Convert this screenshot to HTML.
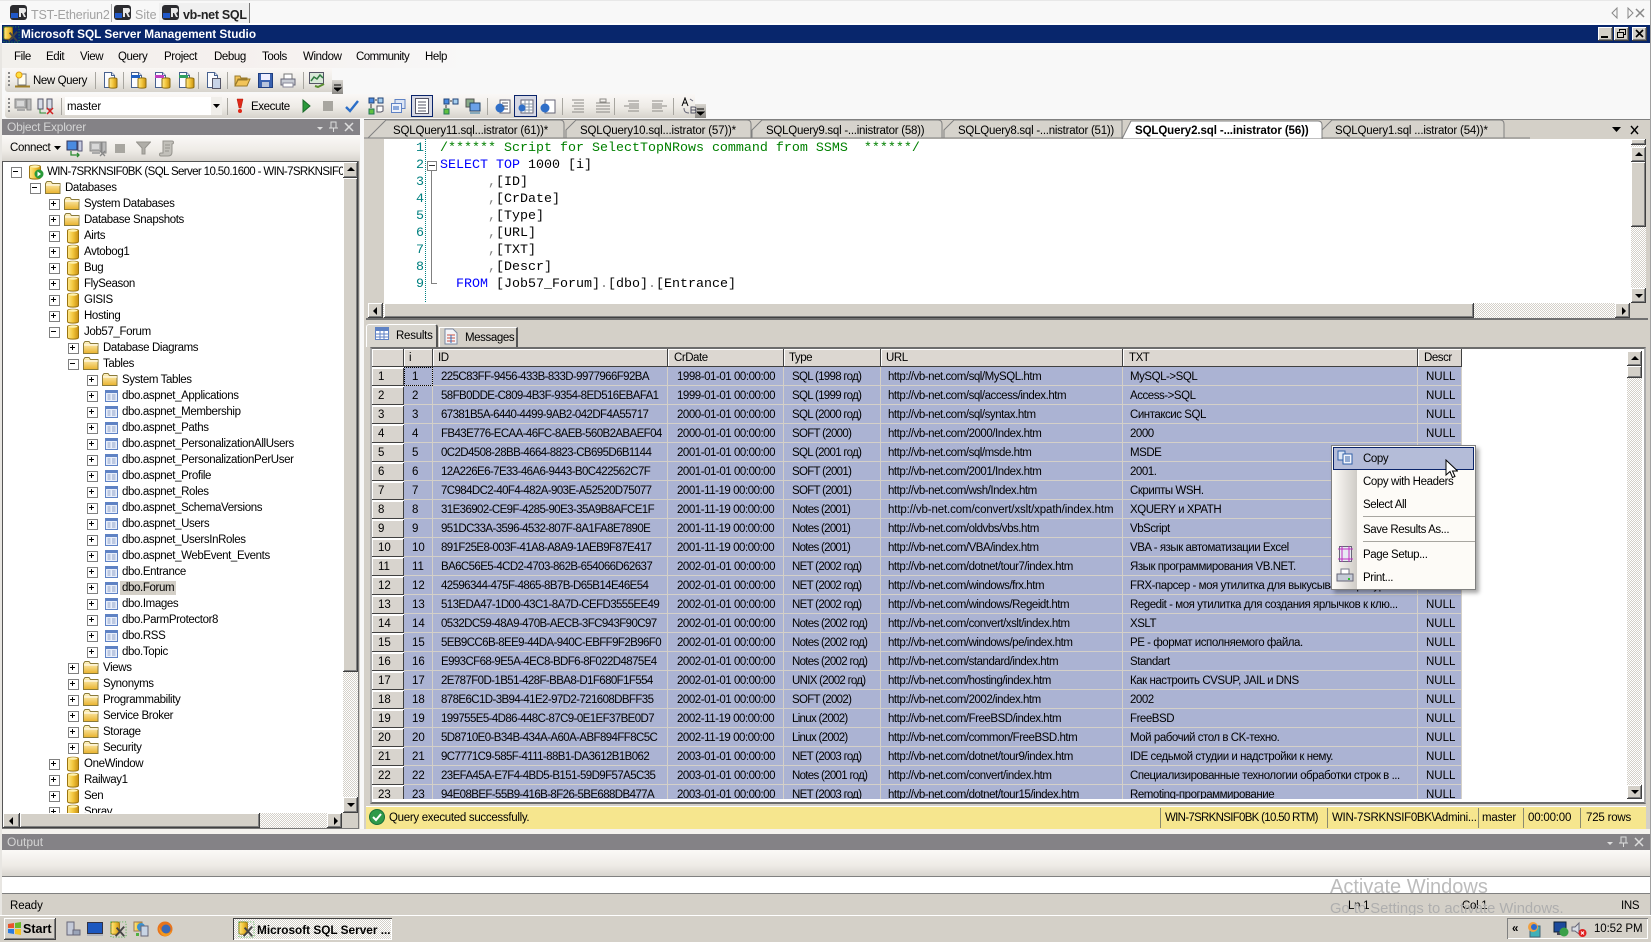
<!DOCTYPE html>
<html lang="en"><head><meta charset="utf-8"><title>Microsoft SQL Server Management Studio</title>
<style>
html,body{margin:0;padding:0}
body{width:1651px;height:942px;overflow:hidden;position:relative;background:#f8f8f8;font:11.5px/16px "Liberation Sans","Noto Sans CJK JP",sans-serif;letter-spacing:-.4px;color:#000}
div,span,svg{box-sizing:border-box}
.a{position:absolute}
.t{position:absolute;white-space:nowrap;height:16px;line-height:16px}
.b{position:absolute;background:#d4d0c8;box-shadow:inset -1px -1px #404040,inset 1px 1px #fff,inset -2px -2px #808080}
.dt{position:absolute;background:repeating-conic-gradient(#d4d0c8 0 25%,#fff 0 50%) 0 0/2px 2px}
.u::after,.dn::after,.l::after,.r::after{content:"";position:absolute;left:50%;top:50%;width:0;height:0;border:4px solid transparent}
.u::after{border-bottom-color:#000;border-top:0;margin:-3px 0 0 -4px}
.dn::after{border-top-color:#000;border-bottom:0;margin:-2px 0 0 -4px}
.l::after{border-right-color:#000;border-left:0;margin:-4px 0 0 -3px}
.r::after{border-left-color:#000;border-right:0;margin:-4px 0 0 -1px}
.tb{position:absolute;background:linear-gradient(#faf8f6,#eeebe6 55%,#d6d3cc)}
.sp{position:absolute;width:1px;background:#a8a6a0}
#tree{position:absolute;left:3px;top:162px;width:340px;height:651px;overflow:hidden;background:#fff;padding-top:2px;letter-spacing:-.38px}
#tree>div{position:relative;height:16px;line-height:16px;white-space:nowrap}
.L0{margin-left:44px}.L1{margin-left:62px}.L2{margin-left:81px}.L3{margin-left:100px}.L4{margin-left:119px}
.x{position:absolute;left:-35px;top:3px;width:9px;height:9px;border:1px solid #808080;background:#fff}
.x::before{content:"";position:absolute;left:1px;top:3px;width:5px;height:1px;background:#000}
.p::after{content:"";position:absolute;left:3px;top:1px;width:1px;height:5px;background:#000}
#tree svg{position:absolute;width:16px;height:16px;top:0}
.fo{left:-20px}.db{left:-19px}.tt{left:-19px}
#grid{position:absolute;left:372px;top:367px;width:1090px;height:432px;overflow:hidden}
.g{position:relative;height:19px}
.g span,.h span{position:absolute;top:0;height:19px;line-height:21px;background:#abb3d3;border-right:1px solid #d4d0c8;border-bottom:1px solid #d4d0c8;white-space:nowrap;overflow:hidden;letter-spacing:-.46px}
.g span:nth-child(1){left:0;width:32px;background:#d8d4ce;box-shadow:inset -1px -1px #404040,inset 1px 1px #fff;padding-left:6px;border:0;height:18px;top:1px;line-height:19px;letter-spacing:0}
.g span:nth-child(2){left:32px;width:29px;padding-left:8px;letter-spacing:0}
.g span:nth-child(3){left:61px;width:235px;padding-left:8px;letter-spacing:-.6px}
.g span:nth-child(4){left:296px;width:116px;padding-left:9px}
.g span:nth-child(5){left:412px;width:97px;padding-left:8px;letter-spacing:-.7px}
.g span:nth-child(6){left:509px;width:242px;padding-left:7px}
.g span:nth-child(7){left:751px;width:295px;padding-left:7px}
.g span:nth-child(8){left:1046px;width:44px;padding-left:8px;letter-spacing:0}
.h{position:absolute;left:372px;top:349px;width:1090px;height:18px}
.h span{background:#dcd7d1;border:0;height:18px;box-shadow:inset -1px -1px #404040,inset 1px 1px #fff;line-height:19px}
.c{position:absolute;left:440px;height:17px;line-height:17px;font:13.33px/17px "Liberation Mono",monospace;letter-spacing:0;white-space:pre}
.n{position:absolute;left:416px;height:17px;font:13.33px/17px "Liberation Mono",monospace;letter-spacing:0;color:#008080}
.k{color:#00f}.m{color:#008000}.q{color:#808080}
#menu{position:absolute;left:1331px;top:445px;width:145px;height:145px;background:#fdfbf7;border:1px solid #808080;box-shadow:3px 3px 4px rgba(0,0,0,.35);z-index:5}
#menu .ic{position:absolute;left:1px;top:1px;width:24px;height:142px;background:linear-gradient(90deg,#fdfbf7,#cfccc7)}
#menu .t{left:31px}
#menu .ln{position:absolute;left:31px;right:0;height:1px;background:#a8a6a0}
</style></head><body>

<svg width="0" height="0" style="position:absolute"><defs>
<linearGradient id="gf" x1="0" y1="0" x2="0" y2="1"><stop offset="0" stop-color="#fff6c8"/><stop offset="1" stop-color="#e9b22c"/></linearGradient>
<linearGradient id="gd" x1="0" y1="0" x2="1" y2="0"><stop offset="0" stop-color="#ffe98a"/><stop offset=".5" stop-color="#f2c63c"/><stop offset="1" stop-color="#c98f10"/></linearGradient>
<symbol id="fo" viewBox="0 0 16 16"><path d="M.5 13.5V3.5l1.5-2h4l1.500 2h7.500v10z" fill="url(#gf)" stroke="#8a7a3a"/><path d="M1 5h14" stroke="#fff" /></symbol>
<symbol id="db" viewBox="0 0 16 16"><path d="M2.500 2.500C2.500 .8 13.500 .8 13.500 2.500V13.500C13.500 15.700 2.500 15.700 2.500 13.500z" fill="url(#gd)" stroke="#9a7410"/><ellipse cx="8" cy="2.500" rx="4.500" ry="1.300" fill="#fff2b0"/></symbol>
<symbol id="tt" viewBox="0 0 16 16"><rect x="2.500" y="2.500" width="12" height="11" fill="#e8eefa" stroke="#5f82c4"/><rect x="3" y="3" width="11" height="2" fill="#5f82c4"/><path d="M4.500 7h3M9 7h3.500M4.500 9h3M9 9h3.500M4.500 11h3M9 11h3.500" stroke="#8fa3c8"/></symbol>
<symbol id="pg" viewBox="0 0 16 16"><path d="M2.500 .5h7l3 3v12h-10z" fill="#fbfcff" stroke="#47618f"/><path d="M9.500 .5v3h3" fill="#dfe6f3" stroke="#47618f"/></symbol>
<symbol id="cy" viewBox="0 0 10 12"><path d="M1 2C1 .5 9 .5 9 2V10C9 11.500 1 11.500 1 10z" fill="url(#gd)" stroke="#8a6a10"/></symbol>
<symbol id="sv" viewBox="0 0 18 16"><rect x="1" y="1" width="11" height="9" fill="#b6b6b6" stroke="#888"/><rect x="3" y="3" width="7" height="5" fill="#d8d8d8"/><rect x="3" y="11" width="8" height="2" fill="#aaa"/><rect x="13" y="1" width="4" height="11" fill="#bbb" stroke="#888"/></symbol>
<symbol id="mr" viewBox="0 0 17 15"><rect width="17" height="15" rx="3" fill="#2b2b2f"/><rect x="1" y="8" width="7" height="5" fill="#2058c8"/><path d="M9 3h5q2 0 2 2.500 0 2-2 2.500l2 4h-2l-2-4h-1v4h-2z" fill="#e8e8e8"/></symbol>
<symbol id="ssms" viewBox="0 0 18 18"><rect x="1" y="1" width="9" height="13" rx="2" fill="url(#gd)" stroke="#9a7410"/><path d="M6 16 15 6M15 16 7 7" stroke="#444" stroke-width="2"/><rect x="1" y="1" width="16" height="16" fill="none" stroke="#33aa33" stroke-dasharray="1 2"/></symbol>
</defs></svg>

<!-- top connection tabs -->
<div class="a" style="left:0;top:0;width:1651px;height:1px;background:#e8e8e8"></div>
<div class="a" style="left:159px;top:3px;width:91px;height:20px;background:#f0f0f0;border-right:1px solid #777"></div>
<div class="a" style="left:111px;top:4px;width:1px;height:18px;background:#aaa"></div>
<svg class="a" style="left:10px;top:5px" width="17" height="15"><use href="#mr"/></svg>
<div class="t" style="left:31px;top:7px;color:#a2a2a2;font-size:12.5px;letter-spacing:-.15px">TST-Etheriun2</div>
<svg class="a" style="left:114px;top:5px" width="17" height="15"><use href="#mr"/></svg>
<div class="t" style="left:135px;top:7px;color:#a2a2a2;font-size:12.5px;letter-spacing:0">Site</div>
<svg class="a" style="left:162px;top:5px" width="17" height="15"><use href="#mr"/></svg>
<div class="t" style="left:183px;top:7px;font-weight:bold;font-size:12.5px;letter-spacing:-.3px;color:#222">vb-net SQL</div>
<svg class="a" style="left:1608px;top:7px" width="40" height="12"><path d="M9 1v10L4 6zM20 1v10l5-5z" fill="none" stroke="#888"/><path d="M28 2l8 8M36 2l-8 8" stroke="#888" stroke-width="1.500"/></svg>
<div class="a" style="left:0;top:23px;width:1651px;height:2px;background:#fff"></div>

<!-- title bar -->
<div class="a" style="left:2px;top:25px;width:1648px;height:18px;background:#08266c"></div>
<svg class="a" style="left:3px;top:26px" width="17" height="17"><use href="#ssms"/></svg>
<div class="t" style="left:21px;top:26px;color:#fff;font-weight:bold;font-size:11.8px;letter-spacing:-.02px">Microsoft SQL Server Management Studio</div>
<div class="b" style="left:1598px;top:27px;width:15px;height:14px"><div class="a" style="left:3px;top:9px;width:7px;height:2px;background:#000"></div></div>
<div class="b" style="left:1614px;top:27px;width:15px;height:14px"><svg class="a" style="left:2px;top:1px" width="11" height="11"><path d="M3.500 3.500V1.500h6v5h-2M1.500 4.500h6v5h-6z" fill="none" stroke="#000"/><path d="M3 1.500h7M1 4.500h7" stroke="#000"/></svg></div>
<div class="b" style="left:1632px;top:27px;width:15px;height:14px"><svg class="a" style="left:3px;top:2px" width="9" height="9"><path d="M1 1l7 7M8 1l-7 7" stroke="#000" stroke-width="1.600"/></svg></div>
<div class="a" style="left:1650px;top:0;width:1px;height:942px;background:#a0a0a0"></div>
<div class="a" style="left:0;top:43px;width:2px;height:899px;background:#e8e6e2"></div>

<!-- menu -->
<div class="a" style="left:2px;top:44px;width:470px;height:24px;background:linear-gradient(90deg,#f2f0ec,#f5f0ee 50%,#f8f8f8)"></div>
<div class="t" style="left:14px;top:49px">File</div>
<div class="t" style="left:46px;top:49px">Edit</div>
<div class="t" style="left:80px;top:49px">View</div>
<div class="t" style="left:118px;top:49px">Query</div>
<div class="t" style="left:164px;top:49px">Project</div>
<div class="t" style="left:214px;top:49px">Debug</div>
<div class="t" style="left:262px;top:49px">Tools</div>
<div class="t" style="left:303px;top:49px">Window</div>
<div class="t" style="left:356px;top:49px;letter-spacing:-.55px">Community</div>
<div class="t" style="left:425px;top:49px">Help</div>

<!-- toolbar 1 -->
<div class="tb" style="left:5px;top:68px;width:327px;height:24px;border-radius:3px 0 0 3px"></div>
<div class="a" style="left:332px;top:80px;width:11px;height:14px;background:linear-gradient(#d8d5cf,#8c8a86)"></div>
<svg class="a" style="left:334px;top:84px" width="8" height="8"><path d="M0 1h7M0 4h7l-3.500 3z" stroke="#000" fill="#000"/></svg>
<div class="a" style="left:8px;top:72px;width:2px;height:16px;background:repeating-linear-gradient(#888 0 2px,transparent 2px 4px)"></div>
<svg class="a" style="left:14px;top:71px" width="18" height="18"><path d="M4 3h8v11H4z" fill="#fffdf0" stroke="#777"/><circle cx="5" cy="4" r="3" fill="#ffe040" stroke="#e09a10"/><path d="M1 15.500h15" stroke="#a08028" stroke-width="2"/></svg>
<div class="t" style="left:33px;top:73px">New Query</div>
<div class="sp" style="left:95px;top:72px;height:17px"></div>
<svg class="a" style="left:102px;top:72px" width="16" height="16"><use href="#pg"/></svg><svg class="a" style="left:108px;top:77px" width="10" height="12"><use href="#cy"/></svg>
<div class="sp" style="left:123px;top:72px;height:17px"></div>
<svg class="a" style="left:129px;top:72px" width="16" height="16"><use href="#pg"/></svg><svg class="a" style="left:137px;top:77px" width="10" height="12"><use href="#cy"/></svg><div class="a" style="left:131px;top:75px;width:9px;height:3px;background:#2060c0"></div>
<svg class="a" style="left:153px;top:72px" width="16" height="16"><use href="#pg"/></svg><svg class="a" style="left:161px;top:77px" width="10" height="12"><use href="#cy"/></svg><div class="a" style="left:155px;top:75px;width:9px;height:3px;background:#c040c0"></div>
<svg class="a" style="left:177px;top:72px" width="16" height="16"><use href="#pg"/></svg><svg class="a" style="left:185px;top:77px" width="10" height="12"><use href="#cy"/></svg><div class="a" style="left:179px;top:75px;width:9px;height:3px;background:#30a060"></div>
<div class="sp" style="left:198px;top:72px;height:17px"></div>
<svg class="a" style="left:205px;top:72px" width="16" height="16"><use href="#pg"/></svg><svg class="a" style="left:212px;top:78px" width="9" height="11"><rect x=".5" y=".5" width="8" height="10" fill="#c8d4e8" stroke="#556"/></svg>
<div class="sp" style="left:227px;top:72px;height:17px"></div>
<svg class="a" style="left:234px;top:73px" width="17" height="15"><path d="M1 13V3h5l1 2h6v2H4L1 13zM1 13h12l3-7H4z" fill="#f2c458" stroke="#9a7a2a"/></svg>
<svg class="a" style="left:258px;top:73px" width="15" height="15"><rect x=".5" y=".5" width="14" height="14" fill="#3a62b0" stroke="#203f80"/><rect x="3" y="1" width="9" height="6" fill="#eef"/><rect x="4" y="9" width="7" height="5" fill="#b8c4dc"/></svg>
<svg class="a" style="left:280px;top:73px" width="16" height="15"><path d="M4 1h8v5H4z" fill="#fff" stroke="#777"/><path d="M1 6h14v6H1z" fill="#c8ccd4" stroke="#667"/><path d="M3 10h10v4H3z" fill="#fff" stroke="#889"/></svg>
<div class="sp" style="left:303px;top:72px;height:17px"></div>
<svg class="a" style="left:309px;top:72px" width="17" height="16"><rect x=".5" y=".5" width="14" height="11" fill="#d8e8d8" stroke="#556"/><path d="M2 9l3-4 3 2 3-4 3 3" fill="none" stroke="#2f7a40" stroke-width="1.500"/><path d="M6 14l3 1 6-3" stroke="#5a8f30" stroke-width="2" fill="none"/></svg>

<!-- toolbar 2 -->
<div class="tb" style="left:5px;top:94px;width:690px;height:24px;border-radius:3px 0 0 3px"></div>
<div class="a" style="left:695px;top:104px;width:11px;height:14px;background:linear-gradient(#d8d5cf,#8c8a86)"></div>
<svg class="a" style="left:697px;top:108px" width="8" height="8"><path d="M0 1h7M0 4h7l-3.500 3z" stroke="#000" fill="#000"/></svg>
<div class="a" style="left:8px;top:98px;width:2px;height:16px;background:repeating-linear-gradient(#888 0 2px,transparent 2px 4px)"></div>
<svg class="a" style="left:14px;top:98px" width="18" height="16"><use href="#sv"/></svg>
<svg class="a" style="left:37px;top:98px" width="18" height="17"><rect x="1" y="1" width="5" height="10" fill="#d8dce8" stroke="#556"/><rect x="10" y="1" width="5" height="10" fill="#d8dce8" stroke="#556"/><path d="M3 11v4h6" stroke="#2a8a30" fill="none"/><path d="M10 10l6 6M16 10l-6 6" stroke="#d02020" stroke-width="1.500"/></svg>
<div class="sp" style="left:61px;top:98px;height:17px"></div>
<div class="a" style="left:65px;top:97px;width:157px;height:18px;background:#fff"></div>
<div class="t" style="left:67px;top:99px;letter-spacing:-.2px">master</div>
<div class="a" style="left:211px;top:97px;width:11px;height:18px;background:#f0eeea"></div>
<svg class="a" style="left:213px;top:104px" width="7" height="4"><path d="M0 0h7L3.500 4z"/></svg>
<div class="sp" style="left:227px;top:98px;height:17px"></div>
<svg class="a" style="left:236px;top:98px" width="8" height="16"><path d="M1 1h6L5 10H3z" fill="#e02818" stroke="#b01808" stroke-width=".5"/><circle cx="4" cy="13" r="2" fill="#e02818"/></svg>
<div class="t" style="left:251px;top:99px">Execute</div>
<svg class="a" style="left:302px;top:98px" width="10" height="16"><path d="M1 2l7 6-7 6z" fill="#2a9a3a" stroke="#1a6a2a"/></svg>
<div class="a" style="left:323px;top:101px;width:10px;height:10px;background:#a8a6a0"></div>
<svg class="a" style="left:345px;top:99px" width="14" height="14"><path d="M1 8l4 4 8-10" fill="none" stroke="#2c6fc8" stroke-width="2.400"/></svg>
<svg class="a" style="left:368px;top:97px" width="16" height="18"><rect x="1" y="1" width="5" height="5" fill="#4a8ae0" stroke="#247"/><rect x="10" y="1" width="5" height="5" fill="#a8d0f0" stroke="#247"/><rect x="1" y="12" width="5" height="5" fill="#60c040" stroke="#275"/><path d="M3 7v4M7 3h2" stroke="#333"/><path d="M9 9h6v5l-2 1h-4z" fill="#fff" stroke="#556"/></svg>
<svg class="a" style="left:391px;top:99px" width="15" height="14"><rect x="4" y=".5" width="10" height="9" fill="#dde6f5" stroke="#5f82c4"/><rect x=".5" y="4.500" width="10" height="9" fill="#eef2fa" stroke="#5f82c4"/><rect x="2" y="7" width="6" height="4" fill="#8aa8dc"/></svg>
<div class="a" style="left:411px;top:95px;width:22px;height:22px;background:#d6d8e4;border:1px solid #0a246a"></div>
<svg class="a" style="left:415px;top:98px" width="14" height="16"><rect x=".5" y=".5" width="13" height="15" fill="#fff" stroke="#556"/><path d="M3 4h8M3 7h8M3 10h8M3 13h8" stroke="#556"/></svg>
<svg class="a" style="left:443px;top:98px" width="16" height="17"><rect x="1" y="1" width="5" height="5" fill="#4a8ae0" stroke="#247"/><rect x="10" y="1" width="5" height="5" fill="#a8d0f0" stroke="#247"/><rect x="1" y="11" width="5" height="5" fill="#60c040" stroke="#275"/><path d="M3 7v3M7 3h2" stroke="#333"/></svg>
<svg class="a" style="left:465px;top:98px" width="16" height="16"><rect x="1" y="1" width="8" height="8" fill="#8a8" stroke="#555"/><rect x="5" y="5" width="10" height="8" fill="#6aa0e8" stroke="#246"/><path d="M5 15h10" stroke="#8ab" stroke-width="2"/></svg>
<div class="sp" style="left:487px;top:98px;height:17px"></div>
<svg class="a" style="left:495px;top:98px" width="16" height="16"><rect x="5" y="2" width="10" height="13" fill="#fff" stroke="#667"/><circle cx="5" cy="10" r="4.500" fill="#2f6fc8"/><path d="M5 2h6M7 5h6M7 8h6M9 11h4" stroke="#556"/></svg>
<div class="a" style="left:514px;top:95px;width:23px;height:22px;background:#d6d8e4;border:1px solid #0a246a"></div>
<svg class="a" style="left:518px;top:98px" width="16" height="16"><rect x="3" y="2" width="12" height="13" fill="#fff" stroke="#667"/><path d="M3 6h12M3 9h12M3 12h12M7 2v13M11 2v13" stroke="#89a"/><circle cx="4" cy="10" r="3.500" fill="#2f6fc8"/></svg>
<svg class="a" style="left:540px;top:98px" width="16" height="16"><rect x="5" y="2" width="10" height="13" fill="#fff" stroke="#667"/><circle cx="5" cy="10" r="4.500" fill="#2f6fc8"/></svg>
<div class="sp" style="left:562px;top:98px;height:17px"></div>
<svg class="a" style="left:570px;top:98px" width="62" height="17"><path d="M2 2h12M4 5h10M2 8h12M4 11h10M2 14h12M26 5h14M26 8h14M26 11h14M26 14h14" stroke="#8c8a86" fill="none"/><path d="M30 1h6v3h-6z" fill="none" stroke="#8c8a86"/></svg>
<div class="sp" style="left:614px;top:98px;height:17px"></div>
<svg class="a" style="left:622px;top:98px" width="46" height="17"><path d="M6 3h11M7 6h10M2 8h15M7 10h10M6 13h11M30 3h11M30 6h10M30 8h15M30 10h10M30 13h11" stroke="#8c8a86" fill="none"/></svg>
<div class="sp" style="left:673px;top:98px;height:17px"></div>
<svg class="a" style="left:681px;top:97px" width="16" height="18"><path d="M1 9l3-8 3 8M2 6h4" stroke="#000" fill="none"/><path d="M9 2l3 2M3 11c0 4 2 5 5 5" stroke="#667" fill="none"/><path d="M10 10h3q2 0 2 1.500t-2 1.500h-3zM10 13h3q2 0 2 1.500t-2 1.500h-3z" stroke="#556" fill="none"/></svg>

<!-- object explorer -->
<div class="a" style="left:2px;top:119px;width:358px;height:16px;background:#848286"></div>
<div class="t" style="left:7px;top:119px;color:#d4d4d4;font-size:12px;letter-spacing:-.25px">Object Explorer</div>
<svg class="a" style="left:314px;top:121px" width="42" height="12"><path d="M3 6h6L6 9z" fill="#ddd"/><path d="M17 1h5v6h-5zM15 7h9M19.500 7v4" stroke="#ddd" fill="none"/><path d="M31 2l8 8M39 2l-8 8" stroke="#ddd" stroke-width="1.500"/></svg>
<div class="a" style="left:2px;top:135px;width:358px;height:26px;background:linear-gradient(#fbf9f7,#eeebe6 60%,#d8d5cf)"></div>
<div class="t" style="left:10px;top:140px;letter-spacing:-.35px">Connect</div>
<svg class="a" style="left:54px;top:146px" width="7" height="4"><path d="M0 0h7L3.500 4z"/></svg>
<svg class="a" style="left:66px;top:140px" width="18" height="18"><rect x="1" y="1" width="10" height="9" fill="#4a8ae0" stroke="#335"/><rect x="12" y="1" width="4" height="10" fill="#c8cce0" stroke="#557"/><path d="M5 11v4h8M11 13l2 2-2 2" stroke="#2a8a30" fill="none" stroke-width="1.300"/></svg>
<svg class="a" style="left:89px;top:140px" width="18" height="18"><use href="#sv"/><path d="M11 11l5 5M16 11l-5 5" stroke="#888" stroke-width="1.300"/></svg>
<div class="a" style="left:115px;top:144px;width:10px;height:9px;background:#a8a6a0"></div>
<svg class="a" style="left:136px;top:141px" width="15" height="14"><path d="M.5 1h14L9 7v6H6V7z" fill="#b0aea8" stroke="#96948e"/></svg>
<svg class="a" style="left:159px;top:140px" width="16" height="17"><path d="M4 1h9c2 0 2 3 0 3v8c0 3-2 4-4 4H2c-2 0-2-3 0-3h2z" fill="#c2c0ba" stroke="#96948e"/><path d="M6 5h5M6 8h5M6 11h4" stroke="#96948e"/></svg>
<div class="a" style="left:2px;top:161px;width:358px;height:668px;background:#d4d0c8"></div>
<div class="a" style="left:2px;top:161px;width:1px;height:668px;background:#555"></div>
<div class="a" style="left:2px;top:161px;width:357px;height:1px;background:#555"></div>
<div class="a" style="left:358px;top:161px;width:1px;height:668px;background:#777"></div>
<div class="a" style="left:2px;top:828px;width:357px;height:1px;background:#777"></div>

<div id="tree">
<div class="L0" style="letter-spacing:-.62px"><i class="x" style="left:-36px"></i><svg class="db" style="left:-20px"><use href="#db"/></svg><svg class="a" style="left:-13px;top:5px;width:10px;height:10px"><circle cx="5" cy="5" r="4.500" fill="#2a9a3a"/><path d="M3.500 2.500l3.500 2.500-3.500 2.500z" fill="#fff"/></svg>WIN-7SRKNSIF0BK (SQL Server 10.50.1600 - WIN-7SRKNSIF0BK\Administrator)</div>
<div class="L1"><i class="x"></i><svg class="fo"><use href="#fo"/></svg>Databases</div>
<div class="L2"><i class="x p"></i><svg class="fo"><use href="#fo"/></svg>System Databases</div>
<div class="L2"><i class="x p"></i><svg class="fo"><use href="#fo"/></svg>Database Snapshots</div>
<div class="L2"><i class="x p"></i><svg class="db"><use href="#db"/></svg>Airts</div>
<div class="L2"><i class="x p"></i><svg class="db"><use href="#db"/></svg>Avtobog1</div>
<div class="L2"><i class="x p"></i><svg class="db"><use href="#db"/></svg>Bug</div>
<div class="L2"><i class="x p"></i><svg class="db"><use href="#db"/></svg>FlySeason</div>
<div class="L2"><i class="x p"></i><svg class="db"><use href="#db"/></svg>GISIS</div>
<div class="L2"><i class="x p"></i><svg class="db"><use href="#db"/></svg>Hosting</div>
<div class="L2"><i class="x"></i><svg class="db"><use href="#db"/></svg>Job57_Forum</div>
<div class="L3"><i class="x p"></i><svg class="fo"><use href="#fo"/></svg>Database Diagrams</div>
<div class="L3"><i class="x"></i><svg class="fo"><use href="#fo"/></svg>Tables</div>
<div class="L4"><i class="x p"></i><svg class="fo"><use href="#fo"/></svg>System Tables</div>
<div class="L4"><i class="x p"></i><svg class="tt"><use href="#tt"/></svg>dbo.aspnet_Applications</div>
<div class="L4"><i class="x p"></i><svg class="tt"><use href="#tt"/></svg>dbo.aspnet_Membership</div>
<div class="L4"><i class="x p"></i><svg class="tt"><use href="#tt"/></svg>dbo.aspnet_Paths</div>
<div class="L4"><i class="x p"></i><svg class="tt"><use href="#tt"/></svg>dbo.aspnet_PersonalizationAllUsers</div>
<div class="L4"><i class="x p"></i><svg class="tt"><use href="#tt"/></svg>dbo.aspnet_PersonalizationPerUser</div>
<div class="L4"><i class="x p"></i><svg class="tt"><use href="#tt"/></svg>dbo.aspnet_Profile</div>
<div class="L4"><i class="x p"></i><svg class="tt"><use href="#tt"/></svg>dbo.aspnet_Roles</div>
<div class="L4"><i class="x p"></i><svg class="tt"><use href="#tt"/></svg>dbo.aspnet_SchemaVersions</div>
<div class="L4"><i class="x p"></i><svg class="tt"><use href="#tt"/></svg>dbo.aspnet_Users</div>
<div class="L4"><i class="x p"></i><svg class="tt"><use href="#tt"/></svg>dbo.aspnet_UsersInRoles</div>
<div class="L4"><i class="x p"></i><svg class="tt"><use href="#tt"/></svg>dbo.aspnet_WebEvent_Events</div>
<div class="L4"><i class="x p"></i><svg class="tt"><use href="#tt"/></svg>dbo.Entrance</div>
<div class="L4"><i class="x p"></i><svg class="tt"><use href="#tt"/></svg><span style="background:#d4d0c8;padding:1px 2px;margin-left:-2px">dbo.Forum</span></div>
<div class="L4"><i class="x p"></i><svg class="tt"><use href="#tt"/></svg>dbo.Images</div>
<div class="L4"><i class="x p"></i><svg class="tt"><use href="#tt"/></svg>dbo.ParmProtector8</div>
<div class="L4"><i class="x p"></i><svg class="tt"><use href="#tt"/></svg>dbo.RSS</div>
<div class="L4"><i class="x p"></i><svg class="tt"><use href="#tt"/></svg>dbo.Topic</div>
<div class="L3"><i class="x p"></i><svg class="fo"><use href="#fo"/></svg>Views</div>
<div class="L3"><i class="x p"></i><svg class="fo"><use href="#fo"/></svg>Synonyms</div>
<div class="L3"><i class="x p"></i><svg class="fo"><use href="#fo"/></svg>Programmability</div>
<div class="L3"><i class="x p"></i><svg class="fo"><use href="#fo"/></svg>Service Broker</div>
<div class="L3"><i class="x p"></i><svg class="fo"><use href="#fo"/></svg>Storage</div>
<div class="L3"><i class="x p"></i><svg class="fo"><use href="#fo"/></svg>Security</div>
<div class="L2"><i class="x p"></i><svg class="db"><use href="#db"/></svg>OneWindow</div>
<div class="L2"><i class="x p"></i><svg class="db"><use href="#db"/></svg>Railway1</div>
<div class="L2"><i class="x p"></i><svg class="db"><use href="#db"/></svg>Sen</div>
<div class="L2"><i class="x p"></i><svg class="db"><use href="#db"/></svg>Spray</div>
</div>
<div class="dt" style="left:343px;top:162px;width:15px;height:651px"></div>
<div class="b u" style="left:343px;top:162px;width:15px;height:16px"></div>
<div class="b" style="left:343px;top:178px;width:15px;height:494px"></div>
<div class="b dn" style="left:343px;top:797px;width:15px;height:16px"></div>
<div class="dt" style="left:3px;top:813px;width:338px;height:15px"></div>
<div class="b l" style="left:3px;top:813px;width:17px;height:15px"></div>
<div class="b" style="left:20px;top:813px;width:240px;height:15px"></div>
<div class="b r" style="left:327px;top:813px;width:15px;height:15px"></div>

<!-- document well -->
<div class="a" style="left:364px;top:119px;width:1286px;height:710px;background:#d4d0c8"></div>
<div class="a" style="left:364px;top:119px;width:1286px;height:1px;background:#808080"></div>
<svg class="a" style="left:360px;top:115px" width="1170" height="26">
<g fill="#d6d3cc" stroke="#808080">
<path d="M8 23 26 5H200q4 0 4 4V23z"/>
<path d="M206 23V15L216 5H387q4 0 4 4V23z"/>
<path d="M392 23V15L402 5H578q4 0 4 4V23z"/>
<path d="M584 23V15L594 5H762V23z"/>
<path d="M962 23V15L972 5H1140q4 0 4 4V23z"/>
</g>
<path d="M4 23H1170" stroke="#808080"/>
<path d="M762 24 771 6H958q4 0 4 4V24z" fill="#fff" stroke="#808080"/>
</svg>
<div class="t" style="left:393px;top:123px;letter-spacing:-.18px">SQLQuery11.sql...istrator (61))*</div>
<div class="t" style="left:580px;top:123px;letter-spacing:-.18px">SQLQuery10.sql...istrator (57))*</div>
<div class="t" style="left:766px;top:123px;letter-spacing:-.25px">SQLQuery9.sql -...inistrator (58))</div>
<div class="t" style="left:958px;top:123px;letter-spacing:-.25px">SQLQuery8.sql -...nistrator (51))</div>
<div class="t" style="left:1135px;top:123px;font-weight:bold;letter-spacing:-.1px">SQLQuery2.sql -...inistrator (56))</div>
<div class="t" style="left:1335px;top:123px;letter-spacing:-.18px">SQLQuery1.sql ...istrator (54))*</div>
<svg class="a" style="left:1612px;top:125px" width="32" height="10"><path d="M0 2h9L4.500 7z"/><path d="M19 1l7 8M26 1l-7 8" stroke="#000" stroke-width="1.400"/></svg>

<!-- editor -->
<div class="a" style="left:366px;top:139px;width:1265px;height:164px;background:#fff"></div>
<div class="a" style="left:366px;top:139px;width:18px;height:164px;background:#d4d0c8"></div>
<div class="a" style="left:425px;top:139px;width:1px;height:164px;background:repeating-linear-gradient(#008080 0 1px,#fff 1px 2px)"></div>
<div class="a" style="left:431px;top:171px;width:1px;height:112px;background:#808080"></div>
<div class="a" style="left:431px;top:283px;width:6px;height:1px;background:#808080"></div>
<div class="a" style="left:427px;top:161px;width:10px;height:10px;border:1px solid #808080;background:#fff"><div class="a" style="left:1px;top:3px;width:6px;height:1px;background:#333"></div></div>
<div class="n" style="top:140px">1</div><div class="n" style="top:157px">2</div><div class="n" style="top:174px">3</div><div class="n" style="top:191px">4</div><div class="n" style="top:208px">5</div><div class="n" style="top:225px">6</div><div class="n" style="top:242px">7</div><div class="n" style="top:259px">8</div><div class="n" style="top:276px">9</div>
<div class="c m" style="top:140px">/****** Script for SelectTopNRows command from SSMS  ******/</div>
<div class="c" style="top:157px"><span class="k">SELECT TOP</span> 1000 [i]</div>
<div class="c" style="top:174px">      <span class="q">,</span>[ID]</div>
<div class="c" style="top:191px">      <span class="q">,</span>[CrDate]</div>
<div class="c" style="top:208px">      <span class="q">,</span>[Type]</div>
<div class="c" style="top:225px">      <span class="q">,</span>[URL]</div>
<div class="c" style="top:242px">      <span class="q">,</span>[TXT]</div>
<div class="c" style="top:259px">      <span class="q">,</span>[Descr]</div>
<div class="c" style="top:276px">  <span class="k">FROM</span> [Job57_Forum]<span class="q">.</span>[dbo]<span class="q">.</span>[Entrance]</div>
<div class="dt" style="left:1631px;top:139px;width:15px;height:164px"></div>
<div class="b" style="left:1631px;top:139px;width:15px;height:6px"></div>
<div class="b u" style="left:1631px;top:147px;width:15px;height:15px"></div>
<div class="b" style="left:1631px;top:162px;width:15px;height:65px"></div>
<div class="b dn" style="left:1631px;top:288px;width:15px;height:15px"></div>
<div class="dt" style="left:368px;top:303px;width:1262px;height:15px"></div>
<div class="b l" style="left:368px;top:303px;width:15px;height:15px"></div>
<div class="b" style="left:384px;top:303px;width:1090px;height:15px"></div>
<div class="b r" style="left:1615px;top:303px;width:15px;height:15px"></div>
<div class="a" style="left:366px;top:318px;width:1282px;height:2px;background:#707070"></div>

<!-- results tabs -->
<div class="a" style="left:366px;top:324px;width:72px;height:23px;background:#d8d5ce;border:1px solid #fff;border-right:2px solid #555;border-bottom:0;border-radius:3px 3px 0 0"></div>
<div class="a" style="left:439px;top:327px;width:79px;height:20px;background:#d4d0c8;border:1px solid #fff;border-right:2px solid #555;border-bottom:0"></div>
<svg class="a" style="left:375px;top:327px" width="14" height="13"><rect x=".5" y=".5" width="13" height="12" fill="#fff" stroke="#5f82c4"/><rect x="1" y="1" width="12" height="3" fill="#5f82c4"/><path d="M5 4v8M9 4v8M1 7h12M1 10h12" stroke="#5f82c4"/></svg>
<div class="t" style="left:396px;top:328px;letter-spacing:-.25px">Results</div>
<svg class="a" style="left:444px;top:328px" width="15" height="17"><path d="M1 1h8l4 4v11H1z" fill="#f4f4f8" stroke="#7a88a0"/><path d="M3 7h8M3 10h8M3 13h8" stroke="#c85040"/><path d="M7 7v8" stroke="#3070c0"/></svg>
<div class="t" style="left:465px;top:330px;letter-spacing:-.4px">Messages</div>

<!-- grid -->
<div class="a" style="left:370px;top:347px;width:1276px;height:457px;background:#fff;border-style:solid;border-width:2px;border-color:#6c6c6c #aaa #6c6c6c #aaa"></div>
<div class="h">
<span style="left:0;width:32px"></span>
<span style="left:32px;width:29px;padding-left:5px">i</span>
<span style="left:61px;width:235px;padding-left:5px">ID</span>
<span style="left:296px;width:116px;padding-left:6px">CrDate</span>
<span style="left:412px;width:97px;padding-left:5px">Type</span>
<span style="left:509px;width:242px;padding-left:5px">URL</span>
<span style="left:751px;width:295px;padding-left:6px">TXT</span>
<span style="left:1046px;width:44px;padding-left:6px">Descr</span>
</div>
<div id="grid">
<div class="g"><span>1</span><span style="outline:1px dotted #000;outline-offset:-1px">1</span><span>225C83FF-9456-433B-833D-9977966F92BA</span><span>1998-01-01 00:00:00</span><span>SQL (1998 год)</span><span>http://vb-net.com/sql/MySQL.htm</span><span>MySQL-&gt;SQL</span><span>NULL</span></div>
<div class="g"><span>2</span><span>2</span><span>58FB0DDE-C809-4B3F-9354-8ED516EBAFA1</span><span>1999-01-01 00:00:00</span><span>SQL (1999 год)</span><span>http://vb-net.com/sql/access/index.htm</span><span>Access-&gt;SQL</span><span>NULL</span></div>
<div class="g"><span>3</span><span>3</span><span>67381B5A-6440-4499-9AB2-042DF4A55717</span><span>2000-01-01 00:00:00</span><span>SQL (2000 год)</span><span>http://vb-net.com/sql/syntax.htm</span><span>Синтаксис SQL</span><span>NULL</span></div>
<div class="g"><span>4</span><span>4</span><span>FB43E776-ECAA-46FC-8AEB-560B2ABAEF04</span><span>2000-01-01 00:00:00</span><span>SOFT (2000)</span><span>http://vb-net.com/2000/Index.htm</span><span>2000</span><span>NULL</span></div>
<div class="g"><span>5</span><span>5</span><span>0C2D4508-28BB-4664-8823-CB695D6B1144</span><span>2001-01-01 00:00:00</span><span>SQL (2001 год)</span><span>http://vb-net.com/sql/msde.htm</span><span>MSDE</span><span>NULL</span></div>
<div class="g"><span>6</span><span>6</span><span>12A226E6-7E33-46A6-9443-B0C422562C7F</span><span>2001-01-01 00:00:00</span><span>SOFT (2001)</span><span>http://vb-net.com/2001/Index.htm</span><span>2001.</span><span>NULL</span></div>
<div class="g"><span>7</span><span>7</span><span>7C984DC2-40F4-482A-903E-A52520D75077</span><span>2001-11-19 00:00:00</span><span>SOFT (2001)</span><span>http://vb-net.com/wsh/Index.htm</span><span>Скрипты WSH.</span><span>NULL</span></div>
<div class="g"><span>8</span><span>8</span><span>31E36902-CE9F-4285-90E3-35A9B8AFCE1F</span><span>2001-11-19 00:00:00</span><span>Notes (2001)</span><span style="letter-spacing:-.13px">http://vb-net.com/convert/xslt/xpath/index.htm</span><span>XQUERY и XPATH</span><span>NULL</span></div>
<div class="g"><span>9</span><span>9</span><span>951DC33A-3596-4532-807F-8A1FA8E7890E</span><span>2001-11-19 00:00:00</span><span>Notes (2001)</span><span>http://vb-net.com/oldvbs/vbs.htm</span><span>VbScript</span><span>NULL</span></div>
<div class="g"><span>10</span><span>10</span><span>891F25E8-003F-41A8-A8A9-1AEB9F87E417</span><span>2001-11-19 00:00:00</span><span>Notes (2001)</span><span>http://vb-net.com/VBA/index.htm</span><span>VBA - язык автоматизации Excel</span><span>NULL</span></div>
<div class="g"><span>11</span><span>11</span><span>BA6C56E5-4CD2-4703-862B-654066D62637</span><span>2002-01-01 00:00:00</span><span>NET (2002 год)</span><span>http://vb-net.com/dotnet/tour7/index.htm</span><span>Язык программирования VB.NET.</span><span>NULL</span></div>
<div class="g"><span>12</span><span>12</span><span>42596344-475F-4865-8B7B-D65B14E46E54</span><span>2002-01-01 00:00:00</span><span>NET (2002 год)</span><span>http://vb-net.com/windows/frx.htm</span><span>FRX-парсер - моя утилитка для выкусывания ресурсов</span><span>NULL</span></div>
<div class="g"><span>13</span><span>13</span><span>513EDA47-1D00-43C1-8A7D-CEFD3555EE49</span><span>2002-01-01 00:00:00</span><span>NET (2002 год)</span><span>http://vb-net.com/windows/Regeidt.htm</span><span>Regedit - моя утилитка для создания ярлычков к клю...</span><span>NULL</span></div>
<div class="g"><span>14</span><span>14</span><span>0532DC59-48A9-470B-AECB-3FC943F90C97</span><span>2002-01-01 00:00:00</span><span>Notes (2002 год)</span><span>http://vb-net.com/convert/xslt/index.htm</span><span>XSLT</span><span>NULL</span></div>
<div class="g"><span>15</span><span>15</span><span>5EB9CC6B-8EE9-44DA-940C-EBFF9F2B96F0</span><span>2002-01-01 00:00:00</span><span>Notes (2002 год)</span><span>http://vb-net.com/windows/pe/index.htm</span><span>PE - формат исполняемого файла.</span><span>NULL</span></div>
<div class="g"><span>16</span><span>16</span><span>E993CF68-9E5A-4EC8-BDF6-8F022D4875E4</span><span>2002-01-01 00:00:00</span><span>Notes (2002 год)</span><span>http://vb-net.com/standard/index.htm</span><span>Standart</span><span>NULL</span></div>
<div class="g"><span>17</span><span>17</span><span>2E787F0D-1B51-428F-BBA8-D1F680F1F554</span><span>2002-01-01 00:00:00</span><span>UNIX (2002 год)</span><span>http://vb-net.com/hosting/index.htm</span><span>Как настроить CVSUP, JAIL и DNS</span><span>NULL</span></div>
<div class="g"><span>18</span><span>18</span><span>878E6C1D-3B94-41E2-97D2-721608DBFF35</span><span>2002-01-01 00:00:00</span><span>SOFT (2002)</span><span>http://vb-net.com/2002/index.htm</span><span>2002</span><span>NULL</span></div>
<div class="g"><span>19</span><span>19</span><span>199755E5-4D86-448C-87C9-0E1EF37BE0D7</span><span>2002-11-19 00:00:00</span><span>Linux (2002)</span><span>http://vb-net.com/FreeBSD/index.htm</span><span>FreeBSD</span><span>NULL</span></div>
<div class="g"><span>20</span><span>20</span><span>5D8710E0-B34B-434A-A60A-ABF894FF8C5C</span><span>2002-11-19 00:00:00</span><span>Linux (2002)</span><span>http://vb-net.com/common/FreeBSD.htm</span><span>Мой рабочий стол в CK-техно.</span><span>NULL</span></div>
<div class="g"><span>21</span><span>21</span><span>9C7771C9-585F-4111-88B1-DA3612B1B062</span><span>2003-01-01 00:00:00</span><span>NET (2003 год)</span><span>http://vb-net.com/dotnet/tour9/index.htm</span><span>IDE седьмой студии и надстройки к нему.</span><span>NULL</span></div>
<div class="g"><span>22</span><span>22</span><span>23EFA45A-E7F4-4BD5-B151-59D9F57A5C35</span><span>2003-01-01 00:00:00</span><span>Notes (2001 год)</span><span>http://vb-net.com/convert/index.htm</span><span>Специализированные технологии обработки строк в ...</span><span>NULL</span></div>
<div class="g"><span>23</span><span>23</span><span>94E08BEF-55B9-416B-8F26-5BE688DB477A</span><span>2003-01-01 00:00:00</span><span>NET (2003 год)</span><span>http://vb-net.com/dotnet/tour15/index.htm</span><span>Remoting-программирование</span><span>NULL</span></div>
</div>
<div class="dt" style="left:1627px;top:351px;width:15px;height:448px"></div>
<div class="b u" style="left:1627px;top:351px;width:15px;height:15px"></div>
<div class="b" style="left:1627px;top:366px;width:15px;height:12px"></div>
<div class="b dn" style="left:1627px;top:785px;width:15px;height:14px"></div>

<!-- status bar -->
<div class="a" style="left:366px;top:806px;width:1280px;height:23px;background:#f6e68e;border-top:1px solid #fff"></div>
<svg class="a" style="left:369px;top:809px" width="16" height="16"><circle cx="8" cy="8" r="7.500" fill="#2f9a4a" stroke="#17703a"/><path d="M4 8l3 3 5-6" fill="none" stroke="#fff" stroke-width="2"/></svg>
<div class="t" style="left:389px;top:810px;letter-spacing:-.3px">Query executed successfully.</div>
<div class="a" style="left:1160px;top:808px;width:1px;height:20px;background:#8a8a70"></div>
<div class="a" style="left:1327px;top:808px;width:1px;height:20px;background:#8a8a70"></div>
<div class="a" style="left:1478px;top:808px;width:1px;height:20px;background:#8a8a70"></div>
<div class="a" style="left:1523px;top:808px;width:1px;height:20px;background:#8a8a70"></div>
<div class="a" style="left:1580px;top:808px;width:1px;height:20px;background:#8a8a70"></div>
<div class="t" style="left:1165px;top:810px;letter-spacing:-.7px">WIN-7SRKNSIF0BK (10.50 RTM)</div>
<div class="t" style="left:1332px;top:810px;letter-spacing:-.3px">WIN-7SRKNSIF0BK\Admini...</div>
<div class="t" style="left:1482px;top:810px;letter-spacing:-.2px">master</div>
<div class="t" style="left:1528px;top:810px;letter-spacing:-.2px">00:00:00</div>
<div class="t" style="left:1586px;top:810px;letter-spacing:-.2px">725 rows</div>

<!-- output -->
<div class="a" style="left:2px;top:829px;width:1648px;height:5px;background:#f4f2ee"></div>
<div class="a" style="left:2px;top:834px;width:1648px;height:16px;background:#848286"></div>
<div class="t" style="left:7px;top:834px;color:#d4d4d4;font-size:12px;letter-spacing:0">Output</div>
<svg class="a" style="left:1606px;top:836px" width="40" height="12"><path d="M1 6h6L4 9z" fill="#ddd"/><path d="M15 1h5v6h-5zM13 7h9M17.500 7v4" stroke="#ddd" fill="none"/><path d="M29 2l8 8M37 2l-8 8" stroke="#ddd" stroke-width="1.500"/></svg>
<div class="a" style="left:2px;top:850px;width:1648px;height:26px;background:linear-gradient(#fbf9f7,#eeebe6 60%,#d8d5cf)"></div>
<div class="a" style="left:2px;top:876px;width:1648px;height:1px;background:#808080"></div>
<div class="a" style="left:2px;top:877px;width:1648px;height:16px;background:#fff"></div>
<div class="a" style="left:2px;top:893px;width:1648px;height:1px;background:#808080"></div>

<!-- app status -->
<div class="a" style="left:2px;top:894px;width:1648px;height:21px;background:#d4d0c8"></div>
<div class="t" style="left:10px;top:898px;letter-spacing:-.1px">Ready</div>
<div class="t" style="left:1348px;top:898px;letter-spacing:-.3px">Ln 1</div>
<div class="t" style="left:1462px;top:898px;letter-spacing:-.3px">Col 1</div>
<div class="t" style="left:1621px;top:898px;letter-spacing:-.3px">INS</div>
<div class="t" style="left:1330px;top:875px;height:24px;line-height:24px;font-size:20px;color:#bcbcbc;letter-spacing:0">Activate Windows</div>
<div class="t" style="left:1330px;top:900px;height:18px;line-height:18px;font-size:14.800px;color:#aeaeae;letter-spacing:0">Go to Settings to activate Windows.</div>

<!-- taskbar -->
<div class="a" style="left:0;top:915px;width:1651px;height:1px;background:#fff"></div>
<div class="a" style="left:0;top:916px;width:1651px;height:26px;background:#d4d0c8"></div>
<div class="b" style="left:4px;top:918px;width:52px;height:22px"></div>
<svg class="a" style="left:7px;top:921px" width="15" height="15"><path d="M1 3l6-1v5H1z" fill="#e8542a"/><path d="M8 2l6-1v6H8z" fill="#6ab82a"/><path d="M1 8h6v5l-6-1z" fill="#2a7ae0"/><path d="M8 8h6v6l-6-1z" fill="#f4c020"/></svg>
<div class="t" style="left:23px;top:921px;font-weight:bold;font-size:12.500px;letter-spacing:0">Start</div>
<svg class="a" style="left:65px;top:921px" width="16" height="16"><rect x="2" y="1" width="7" height="13" fill="#c4cad8" stroke="#667"/><path d="M8 9h7v5H8z" fill="#9aa4b8" stroke="#667"/></svg>
<svg class="a" style="left:87px;top:922px" width="16" height="14"><rect x=".5" y=".5" width="15" height="11" fill="#1c58c0" stroke="#334"/><rect y="12" width="16" height="2" fill="#b0b4bc"/></svg>
<svg class="a" style="left:110px;top:921px" width="17" height="17"><use href="#ssms"/></svg>
<svg class="a" style="left:133px;top:921px" width="16" height="16"><rect x="1" y="1" width="8" height="9" fill="url(#gd)" stroke="#975"/><circle cx="8" cy="6" r="4" fill="#3a90d0"/><rect x="8" y="5" width="7" height="10" fill="#c8d4e4" stroke="#667"/><rect x="3" y="12" width="3" height="3" fill="#50b040"/></svg>
<svg class="a" style="left:157px;top:921px" width="16" height="16"><circle cx="8" cy="8" r="7.500" fill="#e8741c"/><circle cx="9" cy="8" r="4.500" fill="#3a6ab8"/><path d="M2 6c3 7 9 9 13 3-1 5-5 7-8 6-3-1-5-5-5-9z" fill="#f39a1e"/></svg>
<div class="a" style="left:233px;top:918px;width:159px;height:22px;box-shadow:inset 1px 1px #404040,inset -1px -1px #fff;background:repeating-conic-gradient(#d4d0c8 0 25%,#fff 0 50%) 0 0/2px 2px"></div>
<svg class="a" style="left:238px;top:921px" width="17" height="17"><use href="#ssms"/></svg>
<div class="t" style="left:257px;top:922px;font-weight:bold;font-size:11.800px;letter-spacing:0">Microsoft SQL Server ...</div>
<div class="a" style="left:1507px;top:918px;width:141px;height:21px;box-shadow:inset 1px 1px #808080,inset -1px -1px #fff"></div>
<div class="t" style="left:1512px;top:921px;font-weight:bold">«</div>
<svg class="a" style="left:1525px;top:921px" width="17" height="17"><rect x="5" y="5" width="10" height="11" fill="#40b0b8" stroke="#467"/><circle cx="8" cy="6" r="5" fill="#f0a040"/><circle cx="9" cy="6" r="3" fill="#2a6ad0"/></svg>
<svg class="a" style="left:1553px;top:921px" width="17" height="17"><rect x="1" y="1" width="12" height="10" fill="#1c4a9c" stroke="#123"/><rect x="4" y="11" width="8" height="3" fill="#445"/><circle cx="11" cy="11" r="4.500" fill="#3aa048"/></svg>
<svg class="a" style="left:1571px;top:921px" width="16" height="17"><path d="M1 6h3l4-4v11L4 10H1z" fill="#d8dce4" stroke="#667"/><circle cx="11.500" cy="12" r="4" fill="#e02020"/><path d="M10 10.500l3 3M13 10.500l-3 3" stroke="#fff"/></svg>
<div class="t" style="left:1594px;top:921px;letter-spacing:-.1px">10:52 PM</div>

<!-- context menu -->
<div id="menu">
<div class="ic"></div>
<div class="a" style="left:1px;top:1px;width:141px;height:23px;background:#b4bcd8;border:1px solid #0a246a"></div>
<svg class="a" style="left:5px;top:4px" width="16" height="16"><rect x="1" y="1" width="7" height="9" fill="#dde6f5" stroke="#3060a8"/><rect x="6" y="4" width="9" height="10" fill="#f4f6fc" stroke="#3060a8"/><path d="M8 7h5M8 9h5M8 11h5" stroke="#3060a8"/></svg>
<div class="t" style="top:5px">Copy</div>
<div class="t" style="top:28px">Copy with Headers</div>
<div class="t" style="top:51px">Select All</div>
<div class="ln" style="top:70px"></div>
<div class="t" style="top:76px">Save Results As...</div>
<div class="ln" style="top:95px"></div>
<div class="t" style="top:101px">Page Setup...</div>
<div class="t" style="top:124px">Print...</div>
<svg class="a" style="left:6px;top:100px" width="15" height="16"><rect x="1.500" y=".5" width="12" height="15" fill="#e8eaf4" stroke="#667"/><path d="M4 0v16M11 0v16M0 3h15M0 13h15" stroke="#c030c0" fill="none"/></svg>
<svg class="a" style="left:4px;top:122px" width="18" height="16"><path d="M5 1h8v5H5z" fill="#fff" stroke="#778"/><path d="M1 6h16v7H1z" fill="#c4cad6" stroke="#667"/><rect x="12" y="10" width="2" height="2" fill="#30c030"/></svg>
</div>
<svg class="a" style="left:1445px;top:459px;z-index:6" width="13" height="20"><path d="M1 1v15l4-3.500 2.500 6 2.500-1-2.500-5.500h5z" fill="#fff" stroke="#000"/></svg>
</body></html>
